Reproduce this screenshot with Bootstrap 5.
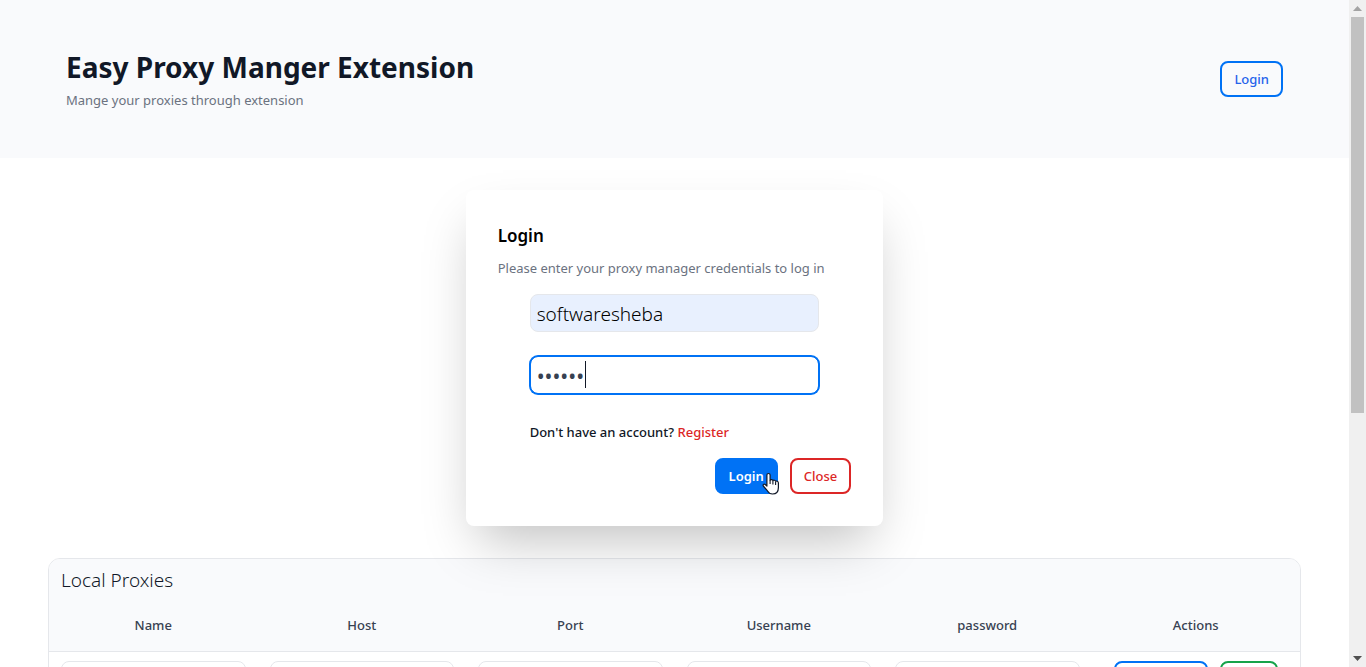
<!DOCTYPE html>
<html lang="en">
<head>
<meta charset="utf-8">
<meta name="viewport" content="width=device-width, initial-scale=1">
<title>Easy Proxy Manger Extension</title>
<link href="https://cdn.jsdelivr.net/npm/bootstrap@5.3.0/dist/css/bootstrap.min.css" rel="stylesheet">
<style>
  body { font-family: "Noto Sans", "Open Sans", sans-serif; font-size: 13px; line-height: 20px; color: #111827; }
  .page-view { min-width: 0; }
  .surface { background: #f9fafc; }
  .page-header { padding: 48px 66px; }
  .page-title { font-size: 28px; line-height: 38px; font-weight: 700; }
  .muted-text { color: #6b7280; }
  .btn-tool { font-size: 13px; line-height: 20px; font-weight: 500; padding: 6px 12px; border-width: 2px; border-radius: 8px; background: #fff; }
  .btn-tool-blue { color: #2563eb; border-color: #0072f5; background: transparent; }
  .btn-tool-red { color: #dc2626; border-color: #dc2626; }
  .btn-tool-green { color: #16a34a; border-color: #16a34a; }
  .btn-tool-solid, .btn-tool-solid:hover { color: #fff; font-weight: 600; background: #0072f5; border-color: #0072f5; }
  .login-card { padding: 32px; border-radius: 8px; background: #fff; box-shadow: 0 25px 50px -12px rgba(0,0,0,.25); }
  .login-title { font-size: 17px; line-height: 28px; font-weight: 600; color: #000; }
  .field-box { height: 38px; padding: 5px 6px 3px; font-size: 19px; line-height: 28px; border: 1px solid #e5e7eb; border-radius: 8px; color: #374151; }
  .field-saved, .field-saved:focus { background: #e8f0fe; color: #000; font-weight: 300; }
  .field-active, .field-active:focus { border-color: #0072f5; box-shadow: 0 0 0 1px #0072f5; font-size: 21px; }
  .caret { left: 55px; top: 5px; width: 1px; height: 27px; background: #111827; }
  .pointer { left: 47px; top: 13px; width: 18px; height: 24px; }
  .register-link { color: #dc2626; }
  .proxy-panel { border: 1px solid #e5e7eb; border-radius: 12px; }
  .proxy-title { padding: 7px 12px 5px; font-size: 19px; line-height: 28px; font-weight: 300; color: #111827; }
  .proxy-table { table-layout: fixed; }
  .proxy-table tr { border-bottom: 1px solid #e5e7eb; }
  .proxy-table th { padding: 16px 12px; font-weight: 500; color: #374151; }
  .proxy-table td { padding: 9px 12px; }
  .btn-wide { width: 94px; height: 38px; }
  .btn-narrow { width: 58px; height: 38px; }
  .scroll-track { width: 17px; background: #f0f0f0; }
  .scroll-arrow { height: 17px; }
  .scroll-thumb { width: 13px; background: #c1c1c1; }
</style>
</head>
<body>
<div class="d-flex vh-100 overflow-hidden">
  <div class="page-view flex-grow-1 overflow-hidden">
    <header class="surface page-header d-flex justify-content-between align-items-center">
      <div>
        <h1 class="page-title mb-1">Easy Proxy Manger Extension</h1>
        <p class="muted-text mb-0">Mange your proxies through extension</p>
      </div>
      <button type="button" class="btn btn-tool btn-tool-blue">Login</button>
    </header>

    <main>
      <div class="d-flex justify-content-center">
        <div class="col-4 px-3 py-4 my-2">
          <form class="login-card">
            <h2 class="login-title mb-2">Login</h2>
            <p class="muted-text mb-3">Please enter your proxy manager credentials to log in</p>
            <div class="px-4 mx-2">
              <input type="text" class="form-control field-box field-saved mb-4" aria-label="Username" value="softwaresheba">
              <div class="position-relative mb-4">
                <input type="password" class="form-control field-box field-active" aria-label="Password" value="secret">
                <span class="caret position-absolute"></span>
              </div>
              <p class="fw-medium mb-3 pt-1">Don't have an account? <a href="#" class="register-link text-decoration-none">Register</a></p>
            </div>
            <div class="d-flex justify-content-end gap-2">
              <div class="position-relative me-1">
                <button type="button" class="btn btn-tool btn-tool-solid">Login</button>
                <svg class="pointer position-absolute" viewBox="0 0 18 24" aria-hidden="true"><path d="M6.500 2.500c1.100 0 1.600.7 1.600 1.600v5c.6-.7 2.500-.6 2.800.5.7-.7 2.400-.4 2.700.7 1-.5 2.800 0 2.800 1.700v4.500c0 4-2.400 6.500-5.900 6.500-2.600 0-4-1.300-5.200-3.300L1.300 15c-.7-1.400.6-2.500 1.900-1.500l1.700 1.500V4.100c0-.9.500-1.600 1.600-1.600z" fill="#fff" stroke="#111827" stroke-width="1.200" stroke-linejoin="round"/><path d="M8.100 9v4M10.900 10v3.500M13.600 11v3" fill="none" stroke="#111827" stroke-width="1.100"/></svg>
              </div>
              <button type="button" class="btn btn-tool btn-tool-red">Close</button>
            </div>
          </form>
        </div>
      </div>

      <div class="px-5">
        <section class="proxy-panel overflow-hidden">
          <h2 class="proxy-title surface mb-0">Local Proxies</h2>
          <table class="proxy-table w-100">
            <thead class="surface">
              <tr class="text-center"><th>Name</th><th>Host</th><th>Port</th><th>Username</th><th>password</th><th>Actions</th></tr>
            </thead>
            <tbody>
              <tr>
                <td><input type="text" class="form-control field-box" aria-label="Name"></td>
                <td><input type="text" class="form-control field-box" aria-label="Host"></td>
                <td><input type="text" class="form-control field-box" aria-label="Port"></td>
                <td><input type="text" class="form-control field-box" aria-label="Username"></td>
                <td><input type="password" class="form-control field-box" aria-label="password"></td>
                <td><div class="d-flex justify-content-center">
                  <button type="button" class="btn btn-tool btn-tool-blue btn-wide me-2" aria-label="Connect"></button>
                  <button type="button" class="btn btn-tool btn-tool-green btn-narrow ms-1" aria-label="Save"></button>
                </div></td>
              </tr>
            </tbody>
          </table>
        </section>
      </div>
    </main>
  </div>

  <div class="scroll-track flex-shrink-0 d-flex flex-column align-items-center" aria-hidden="true">
    <div class="scroll-arrow d-flex align-items-center"><svg width="9" height="5"><path d="M0 5L4.500 0L9 5z" fill="#a3a3a3"/></svg></div>
    <div class="flex-grow-1 w-100 d-flex justify-content-center"><div class="scroll-thumb" style="height:62.6%"></div></div>
    <div class="scroll-arrow d-flex align-items-center"><svg width="9" height="5"><path d="M0 0L4.500 5L9 0z" fill="#505050"/></svg></div>
  </div>
</div>
<script src="https://cdn.jsdelivr.net/npm/bootstrap@5.3.0/dist/js/bootstrap.bundle.min.js"></script>
</body>
</html>
